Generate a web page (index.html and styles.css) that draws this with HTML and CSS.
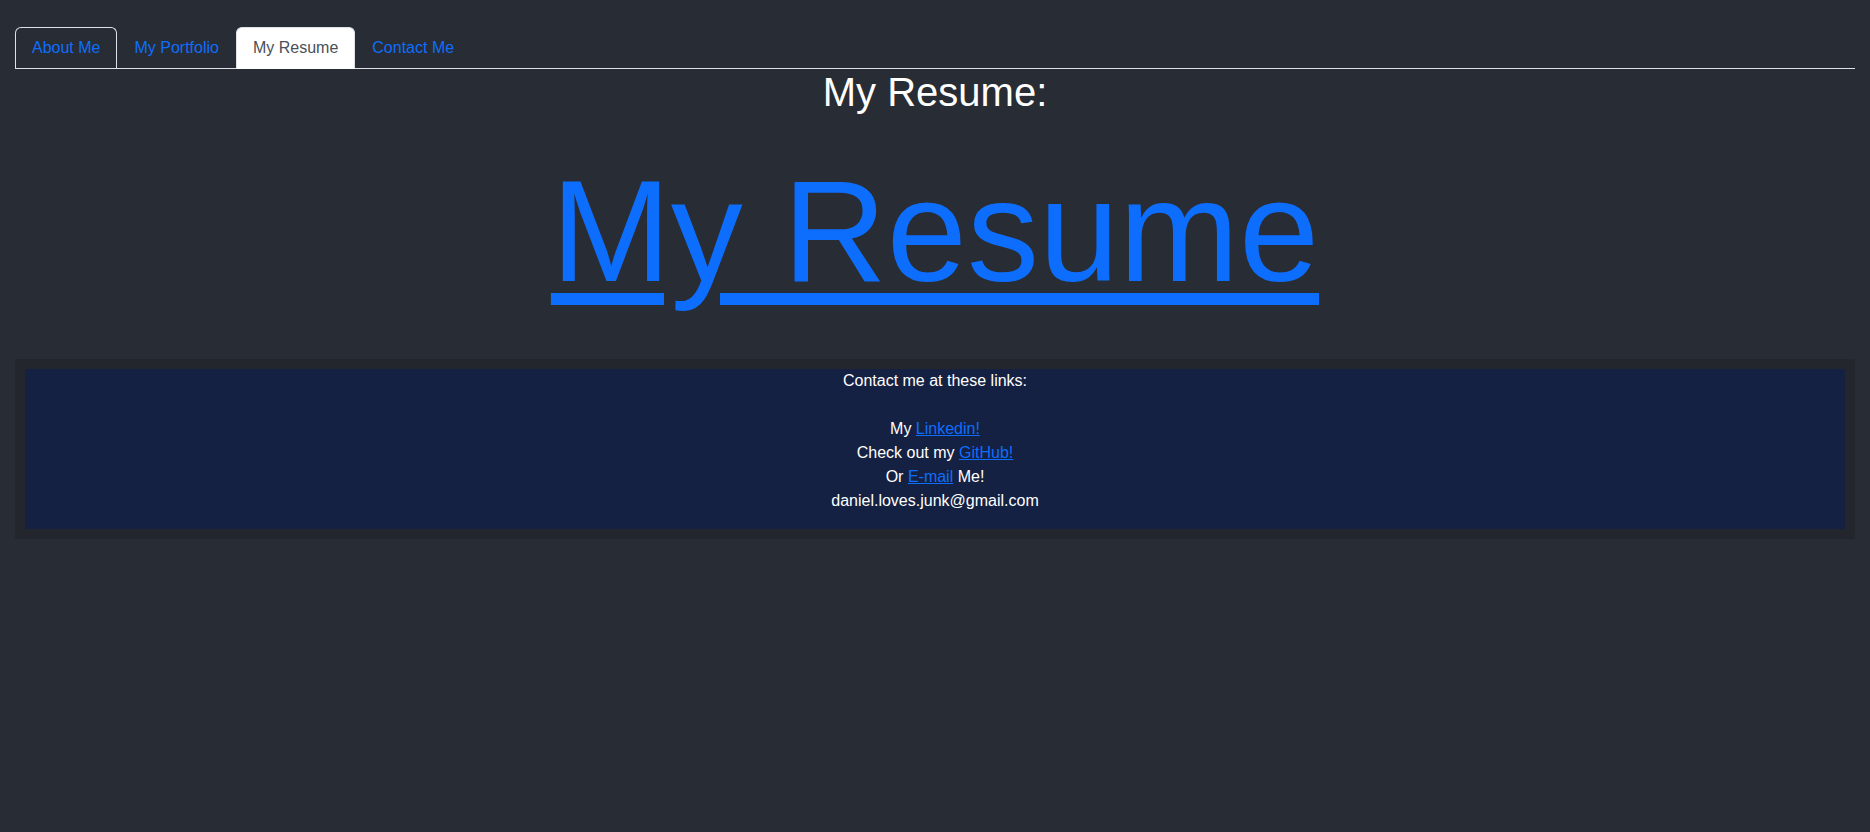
FILE: index.html
```html
<!DOCTYPE html>
<html lang="en">
<head>
<meta charset="utf-8">
<title>My Resume</title>
<link rel="stylesheet" href="styles.css">
</head>
<body>
<div class="app">
  <nav class="tabs">
    <a class="tab tab-focus" href="#about">About Me</a>
    <a class="tab" href="#portfolio">My Portfolio</a>
    <a class="tab tab-active" href="#resume">My Resume</a>
    <a class="tab" href="#contact">Contact Me</a>
  </nav>
  <main class="resume">
    <h1 class="resume-title">My Resume:</h1>
    <p class="resume-big"><a class="resume-link" href="#resume">My Resume</a></p>
  </main>
  <footer class="contact">
    <div class="contact-inner">
      <p class="contact-text">Contact me at these links:<br><br>My <a href="#linkedin">Linkedin!</a><br>Check out my <a href="#github">GitHub!</a><br>Or <a href="#mail">E-mail</a> Me!<br>daniel.loves.junk@gmail.com</p>
    </div>
  </footer>
</div>
</body>
</html>
```
FILE: styles.css
```css
* { box-sizing: border-box; }
html, body {
  margin: 0;
  background: #282c34;
  color: #fff;
  font-family: "Liberation Sans", Arial, sans-serif;
  font-size: 16px;
  line-height: 1.5;
}
a { color: #0d6efd; }
.app {
  padding: 27px 15px 0;
}
.tabs {
  display: flex;
  border-bottom: 1px solid #dee2e6;
}
.tab {
  display: block;
  padding: 8px 16px;
  margin-bottom: -1px;
  border: 1px solid transparent;
  border-top-left-radius: 6px;
  border-top-right-radius: 6px;
  text-decoration: none;
  color: #0d6efd;
  line-height: 24px;
}
.tab-focus {
  border-color: #dee2e6;
  border-bottom-color: transparent;
}
.tab-active {
  background: #fff;
  color: #495057;
  border-color: #dee2e6 #dee2e6 #fff;
}
.resume {
  text-align: center;
}
.resume-title {
  margin: -1px 0 8px;
  font-size: 40px;
  font-weight: 500;
  line-height: 1.2;
}
.resume-big {
  margin: 0 0 19px;
  font-size: 144px;
  line-height: 216px;
}
.resume-link {
  color: #0d6efd;
  text-decoration-thickness: 12px;
  text-underline-offset: 12px;
}
.contact {
  background: #23262d;
  padding: 10px;
}
.contact-inner {
  display: flow-root;
  background: #152142;
  text-align: center;
}
.contact-text {
  margin: 0 0 16px;
}
```
